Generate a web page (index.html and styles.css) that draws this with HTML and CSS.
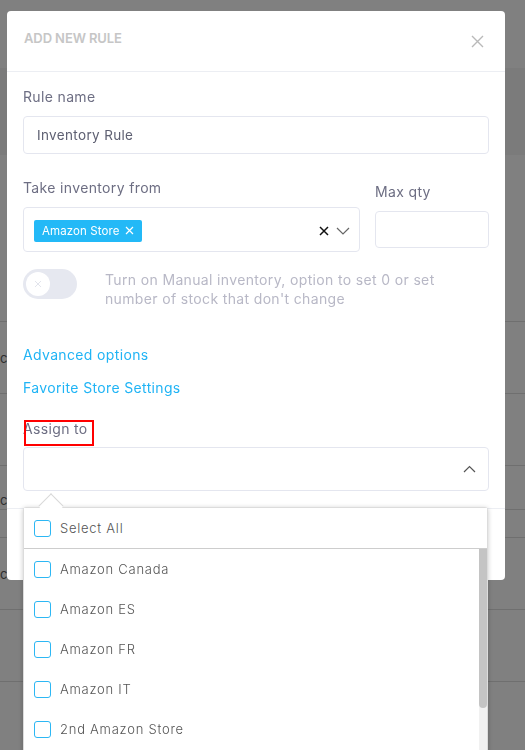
FILE: index.html
```html
<!DOCTYPE html>
<html lang="en">
<head>
<meta charset="utf-8">
<title>Add new rule</title>
<link rel="stylesheet" href="styles.css">
</head>
<body>
<div class="page">
  <div class="page-top"></div>
  <div class="page-band"></div>
  <div class="page-row tall"></div>
  <div class="page-row"><span class="ghost">c</span></div>
  <div class="page-row"></div>
  <div class="page-row short"><span class="ghost">c</span></div>
  <div class="page-row mini"></div>
  <div class="page-row"><span class="ghost">c</span></div>
  <div class="page-row"></div>
  <div class="page-row"></div>
</div>

<div class="overlay">
  <div class="modal">
    <div class="modal-header">
      <span class="modal-title">ADD NEW RULE</span>
      <button class="close" type="button" aria-label="Close">
        <svg width="13" height="13" viewBox="0 0 13 13"><path d="M1 1 L12 12 M12 1 L1 12" stroke="#b9b9b9" stroke-width="1.4" fill="none"/></svg>
      </button>
    </div>

    <div class="modal-body">
      <div class="field">
        <label class="label">Rule name</label>
        <div class="input">Inventory Rule</div>
      </div>

      <div class="row2">
        <div class="field grow">
          <label class="label">Take inventory from</label>
          <div class="select multi">
            <span class="tag">Amazon Store
              <svg width="9" height="9" viewBox="0 0 9 9"><path d="M1 1 L8 8 M8 1 L1 8" stroke="#fff" stroke-width="1.2" fill="none"/></svg>
            </span>
            <span class="select-icons">
              <svg width="10" height="10" viewBox="0 0 10 10"><path d="M1 1 L9 9 M9 1 L1 9" stroke="#111" stroke-width="1.5" fill="none"/></svg>
              <svg width="14" height="8" viewBox="0 0 14 8"><path d="M1 1 L7 7 L13 1" stroke="#666" stroke-width="1.2" fill="none"/></svg>
            </span>
          </div>
        </div>
        <div class="field qty">
          <label class="label">Max qty</label>
          <div class="input qty-input"></div>
        </div>
      </div>

      <div class="toggle-row">
        <span class="switch">
          <span class="knob">
            <svg width="8" height="8" viewBox="0 0 8 8"><path d="M1 1 L7 7 M7 1 L1 7" stroke="#e2e4ec" stroke-width="1" fill="none"/></svg>
          </span>
        </span>
        <p class="toggle-text">Turn on Manual inventory, option to set 0 or set number of stock that don't change</p>
      </div>

      <a class="link first" href="#">Advanced options</a>
      <a class="link" href="#">Favorite Store Settings</a>

      <div class="field assign-field">
        <label class="label marked">Assign to</label>
        <div class="select assign">
          <svg width="13" height="8" viewBox="0 0 13 8"><path d="M1 7 L6.5 1.5 L12 7" stroke="#555" stroke-width="1.2" fill="none"/></svg>
        </div>
      </div>
    </div>

    <div class="modal-footer"></div>

    <div class="dropdown">
      <span class="caret"></span>
      <div class="dd-all">
        <span class="check"></span><span class="dd-text">Select All</span>
      </div>
      <div class="dd-list">
        <div class="dd-item"><span class="check"></span><span class="dd-text">Amazon Canada</span></div>
        <div class="dd-item"><span class="check"></span><span class="dd-text">Amazon ES</span></div>
        <div class="dd-item"><span class="check"></span><span class="dd-text">Amazon FR</span></div>
        <div class="dd-item"><span class="check"></span><span class="dd-text">Amazon IT</span></div>
        <div class="dd-item"><span class="check"></span><span class="dd-text">2nd Amazon Store</span></div>
        <div class="scroll-track"><span class="scroll-thumb"></span></div>
      </div>
    </div>
  </div>
</div>
</body>
</html>
```

FILE: styles.css
```css
* { box-sizing: border-box; }

html, body {
  margin: 0;
  padding: 0;
  height: 100%;
  overflow: hidden;
}

body {
  background: #808080;
  font-family: "Inter", "Open Sans", sans-serif;
  letter-spacing: 0.35px;
}

/* underlying page seen through the overlay */
.page { width: 100%; }
.page-top { height: 68px; background: #808080; }
.page-band { height: 87px; background: #7b7b7b; }
.page-row {
  height: 72px;
  border-top: 1px solid #6f6f6f;
  display: flex;
  align-items: center;
}
.page-row.tall { height: 166px; border-top: 0; }
.page-row.short {
  height: 44px;
  align-items: flex-end;
  padding-bottom: 1px;
}
.page-row.mini { height: 28px; }
.ghost {
  font-size: 13px;
  line-height: 16px;
  color: #2e2e2e;
  margin-left: 0;
}

/* overlay & modal */
.overlay {
  position: fixed;
  inset: 0;
}

.modal {
  position: relative;
  margin: 11px 0 0 7px;
  width: 498px;
  height: 569px;
  background: #fff;
  border-radius: 4px;
  display: flex;
  flex-direction: column;
}

.modal-header {
  height: 61px;
  flex: none;
  display: flex;
  align-items: center;
  justify-content: space-between;
  padding: 0 21px 0 17px;
  border-bottom: 1px solid #eceef3;
}
.modal-title {
  font-size: 13px;
  font-weight: 600;
  color: #c6c6c6;
  padding-bottom: 6px;
  letter-spacing: -0.1px;
}
.close {
  border: 0;
  background: none;
  padding: 0;
  width: 13px;
  height: 13px;
  display: flex;
}

.modal-body {
  padding: 15px 16px 17px;
  display: flex;
  flex-direction: column;
  flex: none;
}

.field { display: flex; flex-direction: column; }

.label {
  font-size: 14px;
  line-height: 20px;
  color: #6d6e83;
  margin-bottom: 9px;
}

.input {
  height: 38px;
  border: 1px solid #e4e6ef;
  border-radius: 4px;
  padding: 0 13px;
  display: flex;
  align-items: center;
  font-size: 13.5px;
  color: #5e6072;
}

.row2 {
  display: flex;
  gap: 15px;
  margin-top: 24px;
}
.grow { flex: 1; }
.qty { width: 114px; padding-top: 4px; }
.qty-input { height: 37px; }

.select {
  height: 45px;
  border: 1px solid #e4e6ef;
  border-radius: 4px;
  display: flex;
  align-items: center;
}
.multi { padding: 0 9px 0 10px; justify-content: space-between; }

.tag {
  height: 22px;
  background: #23b9f7;
  color: #fff;
  font-size: 11.5px;
  letter-spacing: 0.1px;
  border-radius: 2px;
  padding: 0 8px 0 8px;
  display: flex;
  align-items: center;
  gap: 5px;
  margin-top: 2px;
}

.select-icons {
  display: flex;
  align-items: center;
  gap: 7px;
  margin-top: 2px;
}

.toggle-row {
  display: flex;
  align-items: flex-start;
  margin-top: 17px;
  gap: 28px;
}
.switch {
  width: 54px;
  height: 30px;
  flex: none;
  border-radius: 15px;
  background: #e6e8f0;
  display: flex;
  align-items: center;
  padding-left: 3px;
}
.knob {
  width: 24px;
  height: 24px;
  border-radius: 50%;
  background: #fff;
  display: flex;
  align-items: center;
  justify-content: center;
}
.toggle-text {
  margin: 0;
  padding-top: 1px;
  font-size: 14px;
  line-height: 19px;
  color: #b8b8c6;
  width: 345px;
}

.link {
  font-size: 14px;
  line-height: 20px;
  color: #20b4f5;
  text-decoration: none;
  align-self: flex-start;
}
.link.first { margin-top: 37px; }
.link + .link { margin-top: 13px; }

.assign-field { margin-top: 21px; }
.assign-field .label { margin-bottom: 8px; }
.marked {
  position: relative;
  align-self: flex-start;
}
.marked::after {
  content: "";
  position: absolute;
  left: 1px;
  top: 1px;
  width: 66px;
  height: 22px;
  border: 2px solid #ff0000;
}
.assign {
  height: 44px;
  justify-content: flex-end;
  padding-right: 12px;
}

.modal-footer {
  flex: 1;
  border-top: 1px solid #eceef3;
}

/* dropdown */
.dropdown {
  position: absolute;
  left: 16px;
  top: 496px;
  width: 465px;
  height: 300px;
  background: #fff;
  border: 1px solid #dcdcdc;
  border-radius: 3px;
  box-shadow: 0 1px 5px rgba(0, 0, 0, 0.22);
}
.caret {
  position: absolute;
  left: 18px;
  top: -11px;
  width: 18px;
  height: 18px;
  background: #fff;
  border-top: 1px solid #d8d8d8;
  border-left: 1px solid #d8d8d8;
  transform: rotate(45deg);
}
.dd-all {
  position: relative;
  height: 41px;
  display: flex;
  align-items: center;
  padding-left: 10px;
  border-bottom: 1px solid #cdcdcd;
  background: #fff;
}
.dd-list { position: relative; }
.dd-item {
  height: 40px;
  display: flex;
  align-items: center;
  padding-left: 10px;
}
.check {
  width: 17px;
  height: 17px;
  border: 1.5px solid #2cb7f4;
  border-radius: 3px;
  flex: none;
}
.dd-text {
  margin-left: 9px;
  font-size: 13px;
  font-weight: 300;
  letter-spacing: 0.75px;
  color: #555;
}
.scroll-track {
  position: absolute;
  right: 0;
  top: 0;
  width: 8px;
  height: 260px;
  background: #f1f1f1;
}
.scroll-thumb {
  display: block;
  width: 8px;
  height: 159px;
  background: #c4c4c4;
  border-radius: 0 0 4px 4px;
}
```
